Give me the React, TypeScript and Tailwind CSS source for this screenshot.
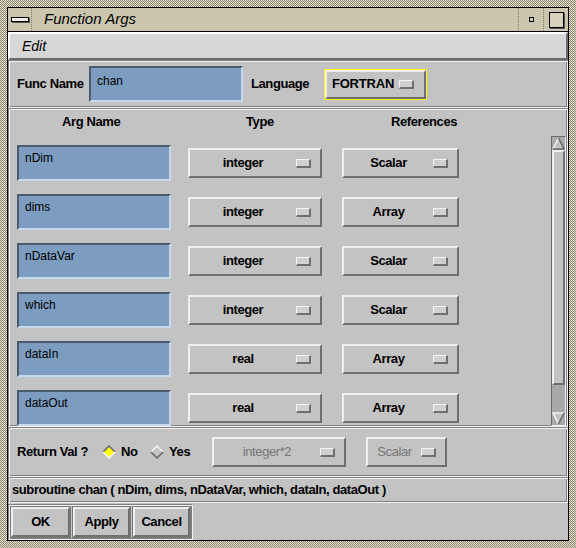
// Function Args 对话框 —— Motif 风格复刻。
const FONT = "font-['Liberation_Sans',Arial,sans-serif]";

// 凸起 / 凹陷 / 蚀刻 边框
const raised =
  'border-2 border-t-[#efefef] border-l-[#efefef] border-b-[#6f6f6f] border-r-[#6f6f6f]';
const field =
  'border-2 border-t-[#4b5b6c] border-l-[#4b5b6c] border-b-[#c7d9ec] border-r-[#c7d9ec] bg-[#7c9cc0]';
const etched =
  'border border-t-[#808080] border-l-[#808080] border-b-[#f2f2f2] border-r-[#f2f2f2] shadow-[inset_1px_1px_0_#f2f2f2,inset_-1px_-1px_0_#808080]';

const rows = [
  ['nDim', 'integer', 'Scalar'],
  ['dims', 'integer', 'Array'],
  ['nDataVar', 'integer', 'Scalar'],
  ['which', 'integer', 'Scalar'],
  ['dataIn', 'real', 'Array'],
  ['dataOut', 'real', 'Array'],
];

function Indicator() {
  return (
    <div className="w-[15px] h-[9px] shrink-0 border-t border-l border-t-[#f4f4f4] border-l-[#f4f4f4] border-b-2 border-r-2 border-b-[#6f6f6f] border-r-[#6f6f6f] bg-[#d0d0d0]" />
  );
}

function OptionMenu({ label, w, disabled }: { label: string; w: string; disabled?: boolean }) {
  return (
    <div className={`${raised} ${w} h-[30px] flex items-center bg-[#c3c3c3]`}>
      <span
        className={`flex-1 text-center text-[13px] tracking-[-0.4px] ${
          disabled ? 'font-normal text-[#767676]' : 'font-bold text-black'
        }`}
      >
        {label}
      </span>
      <Indicator />
      <div className="w-[9px]" />
    </div>
  );
}

function Diamond({ on }: { on?: boolean }) {
  return (
    <svg width="14" height="14" viewBox="0 0 14 14" className="shrink-0">
      <polygon points="7,1 13,7 7,13 1,7" fill={on ? '#ffff00' : '#c3c3c3'} />
      <polyline points="1,7 7,1 13,7" fill="none" stroke={on ? '#6a6a6a' : '#f2f2f2'} strokeWidth="1.6" />
      <polyline points="1,7 7,13 13,7" fill="none" stroke={on ? '#f2f2f2' : '#6a6a6a'} strokeWidth="1.6" />
    </svg>
  );
}

function TitleBar() {
  return (
    <div className="h-[24px] flex items-stretch bg-[#cbc6ae] border-b border-black">
      {/* 窗口菜单按钮 */}
      <div className="w-[24px] flex items-center justify-center border-r border-dotted border-[#7a7664]">
        <div className="w-[18px] h-[5px] bg-[#f4f2e8] border border-black shadow-[1px_1px_0_#555]" />
      </div>
      <div className="flex-1 pl-[12px] flex items-center italic text-[15px] text-black">Function Args</div>
      <div className="w-[25px] flex items-center justify-center border-l border-dotted border-[#7a7664]">
        <div className="w-[5px] h-[5px] border border-black bg-[#cbc6ae]" />
      </div>
      <div className="w-[25px] flex items-center justify-center border-l border-dotted border-[#7a7664]">
        <div className="w-[15px] h-[16px] border border-black bg-[#d6d2bc] shadow-[1px_1px_0_#555]" />
      </div>
    </div>
  );
}

export default function App() {
  return (
    <div
      className={`w-[576px] h-[548px] p-[7px] bg-[repeating-conic-gradient(#e2dcc6_0%_25%,#8e8a76_0%_50%)] bg-[length:2px_2px] ${FONT}`}
    >
      <div className="w-full h-full border border-black flex flex-col bg-[#c3c3c3]">
        <TitleBar />

        {/* 菜单栏 */}
        <div className="h-[28px] flex items-center pl-[12px] bg-[#d7d7d7] border-2 border-t-white border-l-white border-b-[#6b6b6b] border-r-[#6b6b6b]">
          <span className="italic text-[14px] text-black">Edit</span>
        </div>

        {/* Func Name / Language */}
        <div className={`${etched} h-[48px] flex items-center pl-[8px]`}>
          <span className="w-[72px] font-bold text-[13px] tracking-[-0.4px]">Func Name</span>
          <div className={`${field} w-[154px] h-[36px] pl-[6px] pt-[6px] text-[12px] leading-[14px]`}>chan</div>
          <span className="ml-[8px] w-[73px] font-bold text-[13px] tracking-[-0.4px]">Language</span>
          <div className="border border-[#ffff00] w-[103px] h-[31px]">
            <div className={`${raised} h-full flex items-center bg-[#c3c3c3]`}>
              <span className="flex-1 text-center font-bold text-[13px] tracking-[-0.2px]">FORTRAN</span>
              <Indicator />
              <div className="w-[10px]" />
            </div>
          </div>
        </div>

        <div className={`${etched} h-[319px] flex`}>
          <div className="flex-1 overflow-hidden pl-[8px] pt-[2px]">
            <div className="h-[22px] flex items-center font-bold text-[13px] tracking-[-0.4px]">
              <span className="ml-[45px] w-[184px]">Arg Name</span>
              <span className="w-[145px]">Type</span>
              <span>References</span>
            </div>
            <div className="mt-[12px] flex flex-col gap-[13px]">
              {rows.map(([name, type, ref]) => (
                <div key={name} className="h-[36px] flex items-center shrink-0">
                  <div className={`${field} w-[154px] h-[36px] pl-[6px] pt-[4px] text-[12px] leading-[14px]`}>
                    {name}
                  </div>
                  <div className="ml-[17px]">
                    <OptionMenu label={type} w="w-[134px]" />
                  </div>
                  <div className="ml-[20px]">
                    <OptionMenu label={ref} w="w-[117px]" />
                  </div>
                </div>
              ))}
            </div>
          </div>
          {/* 滚动条 */}
          <div className="mt-[27px] w-[15px] h-[290px] flex flex-col bg-[#a9a9a9] border border-t-[#6a6a6a] border-l-[#6a6a6a] border-b-[#f0f0f0] border-r-[#f0f0f0]">
            <svg width="13" height="13" viewBox="0 0 13 13" className="shrink-0">
              <polygon points="6.5,1 12,12 1,12" fill="#c3c3c3" />
              <polyline points="1,12 6.5,1" stroke="#f2f2f2" strokeWidth="1.5" fill="none" />
              <polyline points="6.5,1 12,12 1,12" stroke="#6a6a6a" strokeWidth="1.5" fill="none" />
            </svg>
            <div className={`${raised} h-[235px] bg-[#c3c3c3]`} />
            <div className="flex-1" />
            <svg width="13" height="13" viewBox="0 0 13 13" className="shrink-0">
              <polygon points="1,1 12,1 6.5,12" fill="#c3c3c3" />
              <polyline points="6.5,12 1,1 12,1" stroke="#f2f2f2" strokeWidth="1.5" fill="none" />
              <polyline points="12,1 6.5,12" stroke="#6a6a6a" strokeWidth="1.5" fill="none" />
            </svg>
          </div>
          <div className="w-[1px]" />
        </div>

        {/* 返回值 */}
        <div className={`${etched} h-[50px] flex items-center pl-[8px] text-[13px]`}>
          <span className="w-[85px] font-bold tracking-[-0.4px]">Return Val ?</span>
          <Diamond on />
          <span className="ml-[5px] w-[29px] font-bold tracking-[-0.4px]">No</span>
          <Diamond />
          <span className="ml-[5px] w-[43px] font-bold tracking-[-0.4px]">Yes</span>
          <OptionMenu label="integer*2" w="w-[134px]" disabled />
          <div className="ml-[20px]">
            <OptionMenu label="Scalar" w="w-[81px]" disabled />
          </div>
        </div>

        {/* 函数签名 */}
        <div className={`${etched} h-[26px] flex items-center pl-[3px] font-bold text-[13px] tracking-[-0.4px]`}>
          subroutine chan ( nDim, dims, nDataVar, which, dataIn, dataOut )
        </div>

        {/* 按钮区 */}
        <div className="flex-1 flex items-start pt-[1px]">
          <div className={`${etched} flex gap-[1px] p-[1px]`}>
            {['OK', 'Apply', 'Cancel'].map((b, i) => (
              <div key={b} className={`border border-[#7a7a7a] ${i === 0 ? 'w-[61px]' : 'w-[59px]'} h-[32px]`}>
                <div className={`${raised} h-full flex items-center justify-center font-bold text-[13px] tracking-[-0.4px]`}>
                  {b}
                </div>
              </div>
            ))}
          </div>
        </div>
      </div>
    </div>
  );
}
